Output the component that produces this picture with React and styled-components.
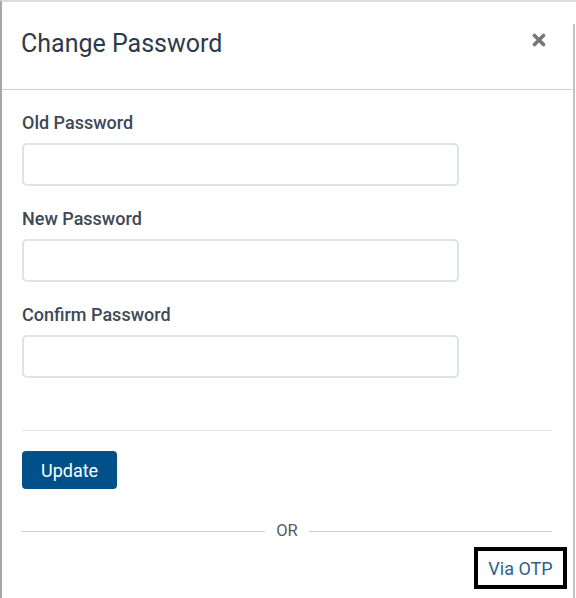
import React from "react"
import styled, { createGlobalStyle } from "styled-components"

const GlobalStyle = createGlobalStyle`
  html, body {
    margin: 0;
    padding: 0;
    background: #ffffff;
    font-family: Roboto, "Liberation Sans", sans-serif;
  }
`

const Modal = styled.div`
  position: relative;
  box-sizing: border-box;
  width: 576px;
  height: 598px;
  overflow: hidden;
  background: #ffffff;
  border-top: 2px solid #dcdce2;
  border-left: 2px solid #a8a8a8;
`

const ScrollThumb = styled.div`
  position: absolute;
  top: 22px;
  right: 1px;
  width: 2px;
  bottom: 0;
  background: #c2c2c2;
`

const Header = styled.div`
  display: flex;
  align-items: center;
  justify-content: space-between;
  box-sizing: border-box;
  height: 88px;
  margin-right: 4px;
  padding: 0 26px 4px 19px;
  border-bottom: 1px solid #cfcfcf;
`

const Title = styled.h2`
  margin: 0;
  font-size: 25px;
  font-weight: 400;
  color: #2d3a4b;
`

const Close = styled.button`
  display: flex;
  padding: 0;
  margin-bottom: 8px;
  border: 0;
  background: none;
  cursor: pointer;
`

const Body = styled.div`
  padding: 21px 24px 0 20px;
`

const Field = styled.div`
  display: flex;
  flex-direction: column;
  gap: 8px;
  width: 437px;
  margin-bottom: 21px;
`

const Label = styled.label`
  font-size: 18px;
  line-height: 24px;
  font-weight: 500;
  color: #3d4858;
`

const Input = styled.input`
  box-sizing: border-box;
  height: 43px;
  border: 2px solid #dde2ec;
  border-radius: 5px;
  padding: 0 12px;
  font: inherit;
  outline: none;
`

const Divider = styled.hr`
  margin: 52px 0 20px;
  border: 0;
  border-top: 1px solid #e3e3e3;
`

const Button = styled.button`
  height: 38px;
  padding: 0 19px;
  border: 0;
  border-radius: 4px;
  background: #00518a;
  color: #ffffff;
  font-family: inherit;
  font-size: 18px;
  cursor: pointer;
`

const OrRow = styled.div`
  display: flex;
  align-items: center;
  gap: 11px;
  margin-top: 31px;
  line-height: 22px;
  color: #555c66;
  font-size: 16.5px;

  &::before,
  &::after {
    content: "";
    flex: 1;
    border-top: 1px solid #cccccc;
  }
`

const OtpRow = styled.div`
  display: flex;
  justify-content: flex-end;
  margin: 5px -15px 0 0;
`

const OtpLink = styled.a`
  box-sizing: border-box;
  width: 93px;
  height: 42px;
  display: flex;
  align-items: center;
  justify-content: center;
  border: 4px solid #000000;
  color: #2d5f8f;
  font-size: 18px;
  text-decoration: none;
`

const CloseIcon = () => (
  <svg width="14" height="14" viewBox="0 0 14 14">
    <path
      d="M2.5 2.5 L11.5 11.5 M11.5 2.5 L2.5 11.5"
      stroke="#767676"
      strokeWidth="3.6"
      strokeLinecap="round"
    />
  </svg>
)

const fields = ["Old Password", "New Password", "Confirm Password"]

const App = () => {
  return (
    <>
      <GlobalStyle />
      <Modal>
        <ScrollThumb />
        <Header>
          <Title>Change Password</Title>
          <Close aria-label="Close">
            <CloseIcon />
          </Close>
        </Header>
        <Body>
          {fields.map((label) => (
            <Field key={label}>
              <Label>{label}</Label>
              <Input type="password" />
            </Field>
          ))}
          <Divider />
          <Button>Update</Button>
          <OrRow>OR</OrRow>
          <OtpRow>
            <OtpLink href="#">Via OTP</OtpLink>
          </OtpRow>
        </Body>
      </Modal>
    </>
  )
}

export default App
